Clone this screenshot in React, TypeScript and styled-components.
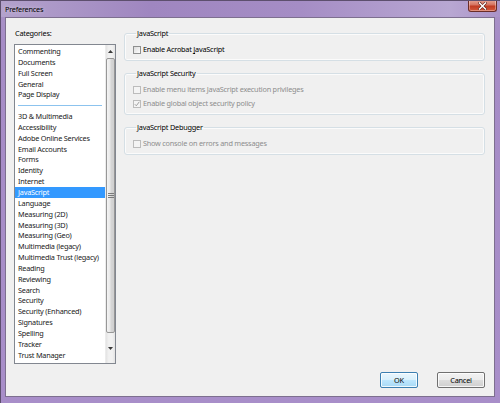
import React from "react";
import styled, { createGlobalStyle, css } from "styled-components";

const Global = createGlobalStyle`
  html, body { margin: 0; padding: 0; background: #a88ec8; }
  body { font-family: "Noto Sans", "Open Sans", sans-serif; }
  * { box-sizing: border-box; }
`;

const FONT = `font-family: "Noto Sans", "Open Sans", sans-serif; font-size: 7.3px; letter-spacing: -0.22px;`;

const Window = styled.div`
  width: 500px;
  height: 403px;
  display: flex;
  flex-direction: column;
  background: linear-gradient(to bottom, #a993c6 0px, #a68cc6 40px, #a88ec9 100%);
  border-left: 1px solid #5d4f6e;
  border-top: 1px solid #5d4f6e;
  overflow: hidden;
`;

const TitleBar = styled.div`
  height: 16px;
  display: flex;
  justify-content: space-between;
  align-items: flex-start;
  padding-left: 4px;
  padding-right: 3px;
  background: linear-gradient(to right, #b3a2cc, #9f86c0 30%, #a58dc5 60%, #b8a7d2 90%, #aa93c8);
`;

const Title = styled.span`
  ${FONT}
  color: #000;
  line-height: 16px;
  text-shadow: 0 0 4px rgba(255, 255, 255, 0.6);
`;

const CloseButton = styled.div`
  width: 29px;
  height: 12px;
  margin-top: -1px;
  border: 1px solid #6a2c27;
  border-top: none;
  border-radius: 0 0 3px 3px;
  background: linear-gradient(to bottom, #e7a597 0%, #d5725f 45%, #c13a22 55%, #d35a3d 100%);
  display: flex;
  align-items: center;
  justify-content: center;
  box-shadow: inset 0 0 0 1px rgba(255, 255, 255, 0.35);
`;

const Frame = styled.div`
  flex: 1;
  margin: 0 5px 6px 4px;
  background: #f0f0f0;
  border: 1px solid #7d6f8f;
  display: flex;
  flex-direction: column;
  padding: 10px 9px 8px 8px;
`;

const Main = styled.div`
  flex: 1;
  display: flex;
  gap: 8px;
  min-height: 0;
`;

const LeftCol = styled.div`
  width: 102px;
  display: flex;
  flex-direction: column;
`;

const Label = styled.div`
  ${FONT}
  line-height: 11px;
  color: #000;
  padding-left: 1px;
  margin-bottom: 5px;
`;

const ListBox = styled.div`
  height: 320px;
  border: 1px solid #828790;
  background: #fff;
  display: flex;
  overflow: hidden;
`;

const Items = styled.div`
  flex: 1;
  overflow: hidden;
  padding-top: 1px;
`;

const Item = styled.div<{ $selected?: boolean }>`
  ${FONT}
  height: 10.85px;
  line-height: 10.85px;
  padding-left: 3px;
  white-space: nowrap;
  color: #1a1a1a;
  ${(p) =>
    p.$selected &&
    css`
      background: #3399ff;
      color: #fff;
    `}
`;

const Separator = styled.div`
  height: 10.85px;
  display: flex;
  align-items: center;
  padding: 0 3px 0 3px;
  &::after {
    content: "";
    flex: 1;
    height: 1px;
    background: #8cc3ee;
  }
`;

const ScrollBar = styled.div`
  width: 10px;
  display: flex;
  flex-direction: column;
  background: linear-gradient(to right, #e3e3e3, #f1f1f1 30%, #f1f1f1 70%, #e3e3e3);
  border-left: 1px solid #ececec;
`;

const Arrow = styled.div<{ $h: number }>`
  height: ${(p) => p.$h}px;
  display: flex;
  align-items: center;
  justify-content: center;
`;

const Thumb = styled.div`
  flex: 1;
  border: 1px solid #979797;
  border-radius: 2px;
  background: linear-gradient(to right, #f4f4f4, #e8e8e8 45%, #d6d6d6 55%, #d0d0d0);
  display: flex;
  align-items: center;
  justify-content: center;
`;

const RightCol = styled.div`
  flex: 1;
  display: flex;
  flex-direction: column;
  gap: 7px;
`;

const Group = styled.fieldset`
  margin: 0;
  border: 1px solid #d5dfe5;
  border-radius: 3px;
  padding: 5px 8px 5px 8px;
  display: flex;
  flex-direction: column;
  gap: 3px;
  box-shadow: inset 0 0 0 1px #fbfbfb;
`;

const Legend = styled.legend`
  ${FONT}
  line-height: 11px;
  padding: 0 1px;
  margin-left: 3px;
  color: #000;
`;

const CheckRow = styled.label<{ $disabled?: boolean }>`
  ${FONT}
  height: 11px;
  line-height: 11px;
  display: flex;
  align-items: center;
  gap: 2px;
  color: ${(p) => (p.$disabled ? "#8d8d8d" : "#000")};
  white-space: nowrap;
`;

const Box = styled.span<{ $disabled?: boolean }>`
  width: 8px;
  height: 8px;
  flex: none;
  border: 1px solid ${(p) => (p.$disabled ? "#bcbcbc" : "#8e8f8f")};
  background: ${(p) =>
    p.$disabled ? "#f4f4f4" : "linear-gradient(135deg, #dcdcdc, #fdfdfd)"};
  display: flex;
  align-items: center;
  justify-content: center;
`;

const ButtonRow = styled.div`
  display: flex;
  justify-content: flex-end;
  gap: 19px;
`;

const Button = styled.button<{ $default?: boolean; $w: number }>`
  ${FONT}
  width: ${(p) => p.$w}px;
  height: 16px;
  padding: 0;
  color: #000;
  border-radius: 2px;
  border: 1px solid ${(p) => (p.$default ? "#3c7fb1" : "#707070")};
  background: ${(p) =>
    p.$default
      ? "linear-gradient(to bottom, #eaf6fd 0%, #d9f0fc 50%, #bee6fd 51%, #a7d9f5 100%)"
      : "linear-gradient(to bottom, #f2f2f2 0%, #ebebeb 50%, #dddddd 51%, #cfcfcf 100%)"};
  box-shadow: inset 0 0 0 1px rgba(255, 255, 255, 0.8);
`;

const top = ["Commenting", "Documents", "Full Screen", "General", "Page Display"];
const rest = [
  "3D & Multimedia",
  "Accessibility",
  "Adobe Online Services",
  "Email Accounts",
  "Forms",
  "Identity",
  "Internet",
  "JavaScript",
  "Language",
  "Measuring (2D)",
  "Measuring (3D)",
  "Measuring (Geo)",
  "Multimedia (legacy)",
  "Multimedia Trust (legacy)",
  "Reading",
  "Reviewing",
  "Search",
  "Security",
  "Security (Enhanced)",
  "Signatures",
  "Spelling",
  "Tracker",
  "Trust Manager",
  "Updater",
];

const Check = ({ checked, disabled }: { checked?: boolean; disabled?: boolean }) => (
  <Box $disabled={disabled}>
    {checked && (
      <svg width="6" height="6" viewBox="0 0 6 6">
        <path d="M0.8 3.2 L2.3 4.8 L5.3 0.8" fill="none" stroke={disabled ? "#a0a0a0" : "#333"} strokeWidth="1" />
      </svg>
    )}
  </Box>
);

export default function App() {
  return (
    <>
      <Global />
      <Window>
        <TitleBar>
          <Title>Preferences</Title>
          <CloseButton>
            <svg width="9" height="8" viewBox="0 0 9 8">
              <path d="M1.5 1 L7.5 7 M7.5 1 L1.5 7" stroke="#5a1a14" strokeWidth="2.6" strokeLinecap="square" />
              <path d="M1.5 1 L7.5 7 M7.5 1 L1.5 7" stroke="#fff" strokeWidth="1.5" strokeLinecap="square" />
            </svg>
          </CloseButton>
        </TitleBar>
        <Frame>
          <Main>
            <LeftCol>
              <Label>Categories:</Label>
              <ListBox>
                <Items>
                  {top.map((t) => (
                    <Item key={t}>{t}</Item>
                  ))}
                  <Separator />
                  {rest.map((t) => (
                    <Item key={t} $selected={t === "JavaScript"}>
                      {t}
                    </Item>
                  ))}
                </Items>
                <ScrollBar>
                  <Arrow $h={13}>
                    <svg width="5" height="3" viewBox="0 0 5 3">
                      <path d="M0 3 L2.5 0 L5 3 Z" fill="#3a3a3a" />
                    </svg>
                  </Arrow>
                  <Thumb>
                    <svg width="6" height="5" viewBox="0 0 6 5">
                      <path d="M0 0.5 H6 M0 2.5 H6 M0 4.5 H6" stroke="#7a7a7a" strokeWidth="1" />
                    </svg>
                  </Thumb>
                  <Arrow $h={30}>
                    <svg width="5" height="3" viewBox="0 0 5 3">
                      <path d="M0 0 L2.5 3 L5 0 Z" fill="#3a3a3a" />
                    </svg>
                  </Arrow>
                </ScrollBar>
              </ListBox>
            </LeftCol>
            <RightCol>
              <Group>
                <Legend>JavaScript</Legend>
                <CheckRow>
                  <Check />
                  <span>
                    Enable Acrobat <u>J</u>avaScript
                  </span>
                </CheckRow>
              </Group>
              <Group>
                <Legend>JavaScript Security</Legend>
                <CheckRow $disabled>
                  <Check disabled />
                  <span>Enable menu items JavaScript execution privileges</span>
                </CheckRow>
                <CheckRow $disabled>
                  <Check disabled checked />
                  <span>Enable global object security policy</span>
                </CheckRow>
              </Group>
              <Group>
                <Legend>JavaScript Debugger</Legend>
                <CheckRow $disabled>
                  <Check disabled />
                  <span>Show console on errors and messages</span>
                </CheckRow>
              </Group>
            </RightCol>
          </Main>
          <ButtonRow>
            <Button $default $w={38}>OK</Button>
            <Button $w={48}>Cancel</Button>
          </ButtonRow>
        </Frame>
      </Window>
    </>
  );
}
